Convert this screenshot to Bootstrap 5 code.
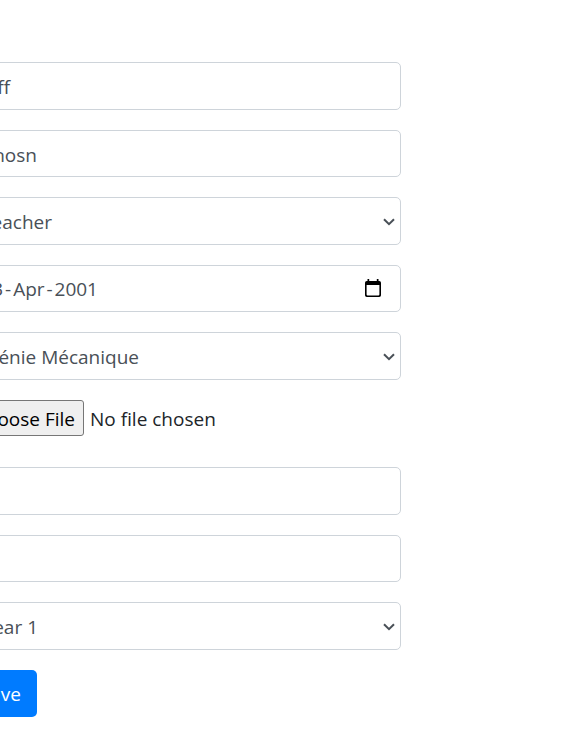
<!DOCTYPE html>
<html lang="en">
<head>
<meta charset="utf-8">
<meta name="viewport" content="width=device-width, initial-scale=1">
<title>Profile form</title>
<link href="https://cdn.jsdelivr.net/npm/bootstrap@5.3.0/dist/css/bootstrap.min.css" rel="stylesheet">
<style>
body { font-family: "Segoe UI", "Open Sans", "Noto Sans", sans-serif; font-size: 19px; line-height: 30px; color: #212529; overflow: hidden; }
.profile-form { width: 421px; margin-left: -20px; padding-top: 62px; row-gap: 20px; }
.profile-form > * { height: 47.5px; flex: none; }
.field { font-size: 19px; line-height: 30px; color: #495057; border: 1px solid #ced4da; border-radius: 5px; background: #fff; padding: 0 5px 0 0; }
/* values end at a set distance from the form's left edge */
.val { display: flex; justify-content: flex-end; white-space: pre; flex: none; padding-top: 2px; }
.v-first { width: 29px; } .v-last { width: 56px; padding-top: 3px; } .v-role { width: 71px; }
.v-date { width: 117px; } .v-dept { width: 158px; } .v-year { width: 57px; }
.dash { width: 10px; text-align: center; }
.caret { margin-top: 2px; }
.cal { margin-right: 14px; }
.file-btn { width: 104px; height: 36px; border: 1px solid #767676; border-radius: 3px; background: #efefef; color: #000; padding: 2px 8px 0 0; }
.file-name { padding: 4px 0 0 6px; }
.save-btn { width: 57px; padding: 2px 16px 0 0; font-size: 19px; border: 0; border-radius: 5px; background: #007bff; color: #fff; }
</style>
<script src="https://cdn.jsdelivr.net/npm/bootstrap@5.3.0/dist/js/bootstrap.bundle.min.js"></script>
</head>
<body class="bg-white">
<form class="profile-form d-flex flex-column">
  <div class="field d-flex align-items-center"><span class="val v-first">ff</span></div>
  <div class="field d-flex align-items-center"><span class="val v-last">hosn</span></div>
  <div class="field d-flex align-items-center justify-content-between"><span class="val v-role">eacher</span>
    <svg class="caret" width="12" height="8" viewBox="0 0 12 8" fill="none" stroke="#495057" stroke-width="2"><path d="M1 1.2 6 6.2 11 1.2"/></svg></div>
  <div class="field d-flex align-items-center justify-content-between"><span class="val v-date"><span>3</span><span class="dash">-</span><span>Apr</span><span class="dash">-</span><span>2001</span></span>
    <svg class="cal" width="16" height="18" viewBox="0 0 16 18"><path fill="#000" fill-rule="evenodd" d="M2.5 0h1.7v2h7.6V0h1.7v2h.7q1.8 0 1.8 1.8v12.4q0 1.8-1.8 1.8H1.8Q0 18 0 16.2V3.8Q0 2 1.8 2h.7zM1.6 6v9.6q0 .8.8.8h11.2q.8 0 .8-.8V6z"/></svg></div>
  <div class="field d-flex align-items-center justify-content-between"><span class="val v-dept">énie Mécanique</span>
    <svg class="caret" width="12" height="8" viewBox="0 0 12 8" fill="none" stroke="#495057" stroke-width="2"><path d="M1 1.2 6 6.2 11 1.2"/></svg></div>
  <div class="d-flex align-items-start"><span class="file-btn d-flex align-items-center justify-content-end text-nowrap"><span>Choose File</span></span><span class="file-name text-nowrap">No file chosen</span></div>
  <div class="field"></div>
  <div class="field"></div>
  <div class="field d-flex align-items-center justify-content-between"><span class="val v-year">ear 1</span>
    <svg class="caret" width="12" height="8" viewBox="0 0 12 8" fill="none" stroke="#495057" stroke-width="2"><path d="M1 1.2 6 6.2 11 1.2"/></svg></div>
  <button type="button" class="save-btn btn btn-primary d-flex align-items-center justify-content-end"><span>Save</span></button>
</form>
</body>
</html>
